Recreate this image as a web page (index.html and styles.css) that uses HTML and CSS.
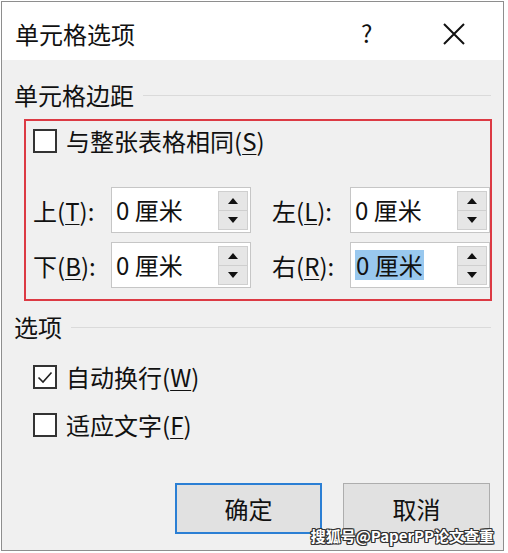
FILE: index.html
```html
<!DOCTYPE html>
<html lang="zh-CN">
<head>
<meta charset="utf-8">
<link rel="stylesheet" href="styles.css">
</head>
<body>
<div class="window">
  <div class="titlebar">
    <div class="title">单元格选项</div>
    <div class="help">?</div>
    <div class="close">
      <svg width="22" height="22" viewBox="0 0 22 22"><path d="M1 1L21 21M21 1L1 21" stroke="#111" stroke-width="2" fill="none"/></svg>
    </div>
  </div>
  <div class="content">
    <div class="group-title first"><span>单元格边距</span><i class="rule"></i></div>
    <div class="redbox">
      <div class="check-row">
        <span class="box"></span><span class="label">与整张表格相同(<u>S</u>)</span>
      </div>
      <div class="grid">
        <div class="fld">上(<u>T</u>):</div>
        <div class="spin"><span class="val">0 厘米</span><span class="btns"><span class="up"></span><span class="dn"></span></span></div>
        <div class="fld right">左(<u>L</u>):</div>
        <div class="spin"><span class="val">0 厘米</span><span class="btns"><span class="up"></span><span class="dn"></span></span></div>
        <div class="fld">下(<u>B</u>):</div>
        <div class="spin"><span class="val">0 厘米</span><span class="btns"><span class="up"></span><span class="dn"></span></span></div>
        <div class="fld right">右(<u>R</u>):</div>
        <div class="spin"><span class="val sel">0 厘米</span><span class="btns"><span class="up"></span><span class="dn"></span></span></div>
      </div>
    </div>
    <div class="group-title second"><span>选项</span><i class="rule"></i></div>
    <div class="opts">
      <div class="check-row">
        <span class="box"><svg width="20" height="20" viewBox="0 0 20 20"><path d="M3.5 10.5L8 15L16.5 5.5" stroke="#222" stroke-width="1.6" fill="none"/></svg></span><span class="label">自动换行(<u>W</u>)</span>
      </div>
      <div class="check-row">
        <span class="box"></span><span class="label">适应文字(<u>F</u>)</span>
      </div>
    </div>
    <div class="buttons">
      <div class="btn ok">确定</div>
      <div class="btn">取消</div>
    </div>
  </div>
  <div class="watermark">搜狐号@PaperPP论文查重</div>
</div>
</body>
</html>
```
FILE: styles.css
```css
* { box-sizing: border-box; }
html, body { margin: 0; padding: 0; background: #fff; }
body { font-family: "Noto Sans CJK SC", "Noto Sans", sans-serif; color: #111; }
u { text-decoration-thickness: 1px; text-underline-offset: 3px; }

.window {
  position: relative;
  margin: 1px 0 0 1px;
  width: 503px;
  height: 550px;
  border: 1px solid #8e8e8e;
  background: #f0f0f0;
}
.titlebar {
  height: 58px;
  background: #fff;
  display: flex;
  align-items: center;
}
.title { font-size: 24px; margin-left: 13px; line-height: 30px; margin-top: 5px; }
.help { font-size: 24px; margin-left: 226px; line-height: 30px; margin-top: 4px; }
.close { margin-left: 71px; width: 22px; height: 22px; margin-top: 5px; }
.close svg { display: block; }

.content { padding: 0 0 0 12px; }
.group-title {
  display: flex;
  align-items: center;
  height: 28px;
  font-size: 24px;
  line-height: 28px;
}
.group-title.first { margin-top: 21px; }
.group-title.second { margin-top: 12px; }
.group-title .rule { flex: 1; height: 1px; background: #dadada; margin: 0 12px 0 9px; }

.redbox {
  margin: 10px 0 0 10px;
  width: 468px;
  height: 182px;
  border: 2px solid #dc3a44;
  padding: 7px 0 0 7px;
}
.check-row { display: flex; align-items: center; height: 25px; }
.box {
  width: 24px; height: 24px;
  border: 2px solid #333;
  background: #fff;
  display: flex; align-items: center; justify-content: center;
}
.box svg { display: block; }
.label { font-size: 24px; margin-left: 9px; line-height: 28px; }

.grid {
  display: grid;
  grid-template-columns: 78px 140px 99px 140px;
  row-gap: 9px;
  margin-top: 34px;
}
.fld { font-size: 24px; line-height: 46px; height: 46px; padding-top: 1px; }
.fld.right { margin-left: 21px; }
.spin {
  height: 46px;
  background: #fff;
  border: 1px solid #c6c6c6;
  display: flex;
  align-items: center;
  padding-left: 4px;
}
.val { font-size: 24px; line-height: 30px; flex: 1; }
.val.sel { flex: 0 0 auto; background: #99c8ee; padding: 0 1px; }
.spin .val.sel + .btns { margin-left: auto; }
.btns {
  width: 30px;
  margin-right: 2px;
  display: flex;
  flex-direction: column;
}
.btns .up, .btns .dn {
  height: 20px;
  background: #e6e6e6;
  border: 1px solid #cfcfcf;
  display: flex; align-items: center; justify-content: center;
}
.btns .dn { border-top: none; height: 19px; }
.btns .up::after {
  content: ""; width: 0; height: 0;
  border-left: 5px solid transparent; border-right: 5px solid transparent;
  border-bottom: 6px solid #111;
}
.btns .dn::after {
  content: ""; width: 0; height: 0;
  border-left: 5px solid transparent; border-right: 5px solid transparent;
  border-top: 6px solid #111;
}

.opts { margin: 23px 0 0 19px; display: flex; flex-direction: column; gap: 23px; }

.buttons { display: flex; margin: 46px 0 0 161px; gap: 21px; }
.btn {
  width: 147px; height: 51px;
  background: #e1e1e1;
  border: 1px solid #adadad;
  font-size: 24px;
  display: flex; align-items: center; justify-content: center;
}
.btn.ok { border: 2px solid #2b7fd4; }

.watermark {
  position: absolute;
  right: 9px;
  bottom: 5px;
  font-size: 15px;
  font-weight: bold;
  color: #fff;
  line-height: 18px;
  text-shadow: 1px 1px 0 #333, -1px -1px 0 #333, 1px -1px 0 #333, -1px 1px 0 #333, 0 1px 0 #333, 0 -1px 0 #333, 1px 0 0 #333, -1px 0 0 #333;
}
```
